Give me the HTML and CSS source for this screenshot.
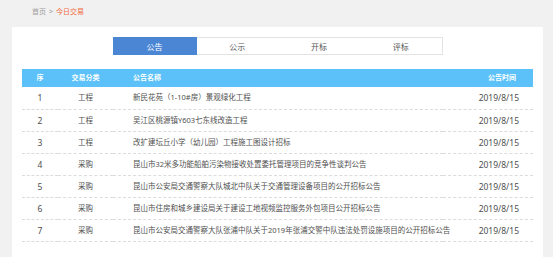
FILE: index.html
```html
<!DOCTYPE html>
<html lang="zh-CN">
<head>
    <meta charset="UTF-8">
    <meta name="viewport" content="width=device-width, initial-scale=1.0">
    <title>今日交易</title>

    <link rel="stylesheet" href="styles.css">

</head>
<body>

    <div class="breadcrumb">
        <span>首页</span>
        <span class="sep">&gt;</span>
        <span class="current">今日交易</span>
    </div>

    <div class="panel">

        <div class="tabs">
            <div class="tab active">公告</div>
            <div class="tab">公示</div>
            <div class="tab">开标</div>
            <div class="tab">评标</div>
        </div>

        <table class="list">
            <thead>
                <tr>
                    <th class="col-no">序</th>
                    <th class="col-type">交易分类</th>
                    <th class="col-name">公告名称</th>
                    <th class="col-date">公告时间</th>
                </tr>
            </thead>
            <tbody>
                <tr>
                    <td class="col-no">1</td>
                    <td class="col-type">工程</td>
                    <td class="col-name">新民花苑（1-10#房）景观绿化工程</td>
                    <td class="col-date">2019/8/15</td>
                </tr>
                <tr>
                    <td class="col-no">2</td>
                    <td class="col-type">工程</td>
                    <td class="col-name">吴江区桃源镇Y603七东线改造工程</td>
                    <td class="col-date">2019/8/15</td>
                </tr>
                <tr>
                    <td class="col-no">3</td>
                    <td class="col-type">工程</td>
                    <td class="col-name">改扩建坛丘小学（幼儿园）工程施工图设计招标</td>
                    <td class="col-date">2019/8/15</td>
                </tr>
                <tr>
                    <td class="col-no">4</td>
                    <td class="col-type">采购</td>
                    <td class="col-name">昆山市32米多功能船舶污染物接收处置委托管理项目的竞争性谈判公告</td>
                    <td class="col-date">2019/8/15</td>
                </tr>
                <tr>
                    <td class="col-no">5</td>
                    <td class="col-type">采购</td>
                    <td class="col-name">昆山市公安局交通警察大队城北中队关于交通管理设备项目的公开招标公告</td>
                    <td class="col-date">2019/8/15</td>
                </tr>
                <tr>
                    <td class="col-no">6</td>
                    <td class="col-type">采购</td>
                    <td class="col-name">昆山市住房和城乡建设局关于建设工地视频监控服务外包项目公开招标公告</td>
                    <td class="col-date">2019/8/15</td>
                </tr>
                <tr>
                    <td class="col-no">7</td>
                    <td class="col-type">采购</td>
                    <td class="col-name">昆山市公安局交通警察大队张浦中队关于2019年张浦交警中队违法处罚设施项目的公开招标公告</td>
                    <td class="col-date">2019/8/15</td>
                </tr>
            </tbody>
        </table>

    </div>

</body>
</html>
```

FILE: styles.css
```css
:root {
    --tab-blue: #4a86d4;
    --head-blue: #5bc1f8;
    --text: #4f4f4f;
}

*, *::before, *::after {
    margin: 0;
    padding: 0;
    box-sizing: border-box;
}

body {
    width: 100%;
    height: 100vh;
    background-color: #f1f1f1;
    font-family: "Noto Sans", "Noto Sans CJK SC", sans-serif;
    color: var(--text);
    overflow: hidden;
}

.breadcrumb {
    height: 27px;
    padding: 7px 0 0 32px;
    font-size: 7px;
    line-height: 10px;
    color: #a0a0a0;
    display: flex;
    gap: 3px;
}

.breadcrumb .current {
    color: #f26b3a;
}

.panel {
    width: 531px;
    margin-left: 12px;
    height: 240px;
    background-color: white;
    padding: 10px 10px 0 10px;
}

.tabs {
    width: 330px;
    height: 18px;
    margin: 0 auto 14px auto;
    display: flex;
    border: 1px solid #e3e3e3;
}

.tab {
    flex: 1;
    display: flex;
    justify-content: center;
    align-items: center;
    font-size: 8px;
    color: #555;
}

.tab.active {
    flex: 0 0 84px;
    margin: -1px 0 -1px -1px;
    background-color: var(--tab-blue);
    color: white;
}

.list {
    width: 100%;
    border-collapse: collapse;
    table-layout: fixed;
}

.list th {
    height: 18px;
    background-color: var(--head-blue);
    color: white;
    font-size: 7px;
    font-weight: bold;
    line-height: 18px;
}

.list td {
    height: 22px;
    font-size: 7.5px;
    line-height: 21px;
    border-bottom: 1px dashed #dcdcdc;
    white-space: nowrap;
}

.list td.col-no,
.list td.col-date {
    font-size: 8.5px;
}

.col-no {
    width: 36px;
    text-align: center;
}

.col-type {
    width: 55px;
    text-align: center;
}

.col-name {
    text-align: left;
    padding-left: 20px;
}

.col-date {
    width: 90px;
    text-align: right;
    padding-right: 14px;
}

.list th.col-date {
    padding-right: 17px;
}
```
